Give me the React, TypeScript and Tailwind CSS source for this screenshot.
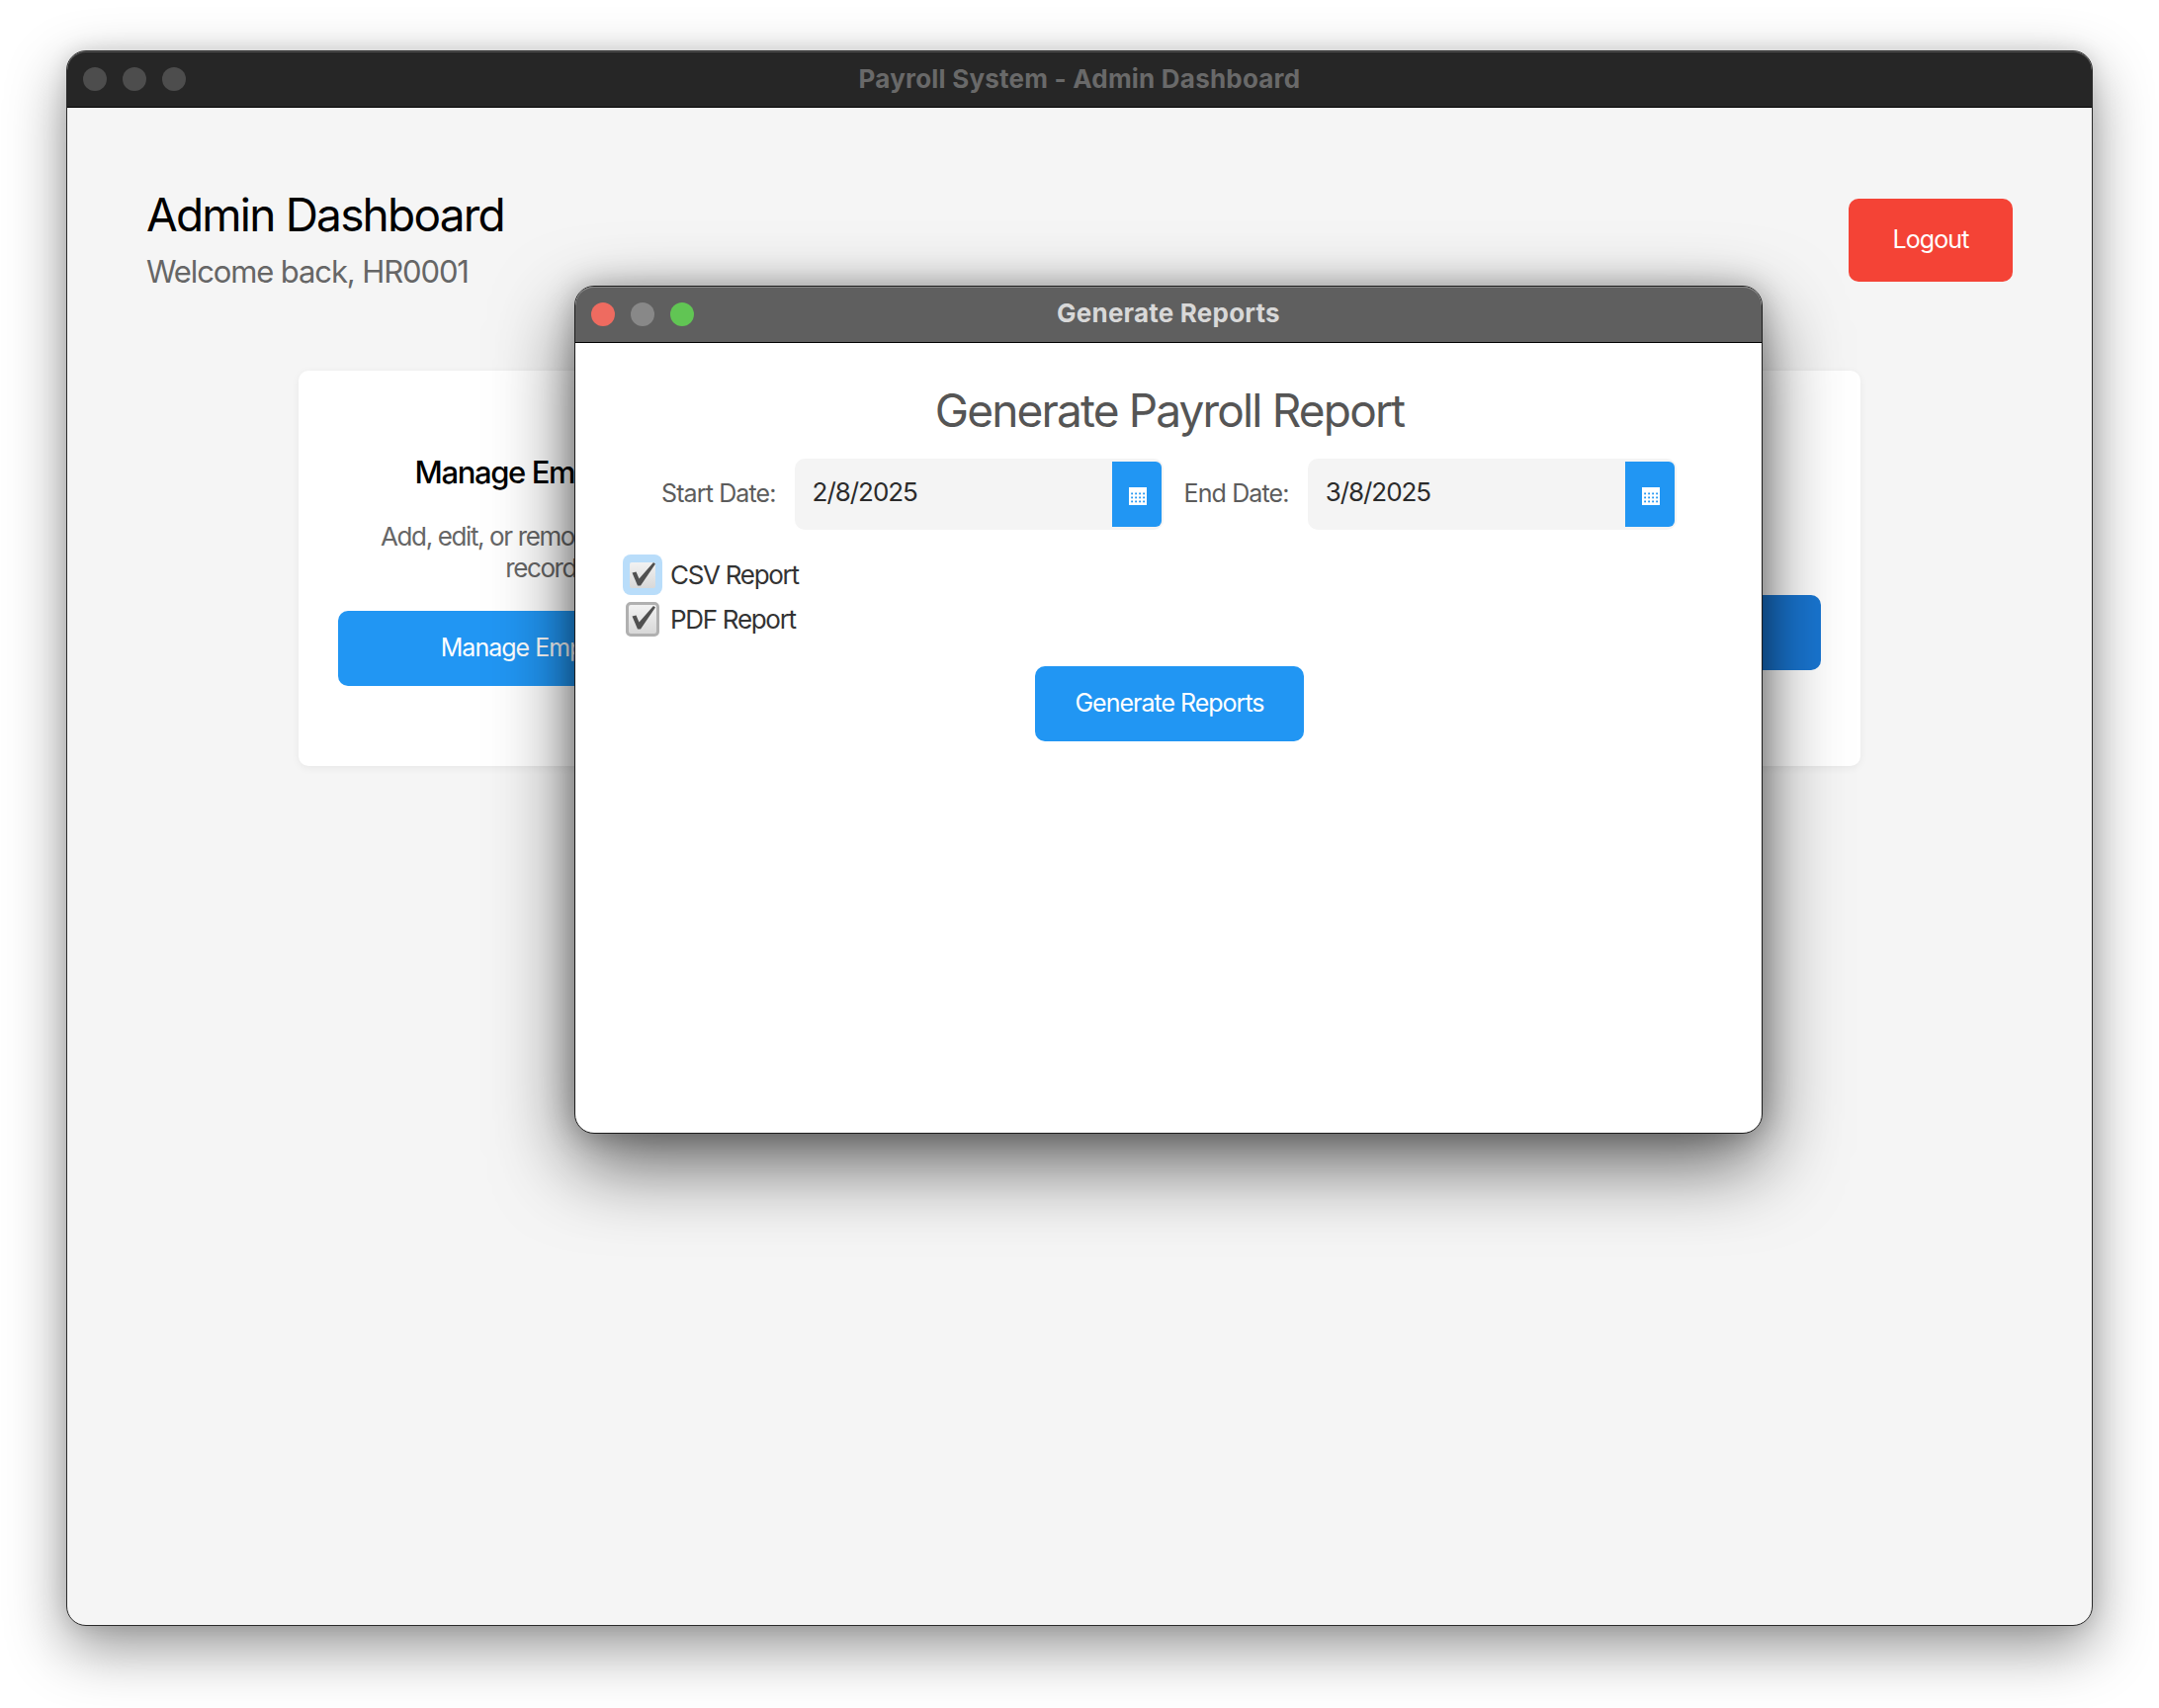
import React from 'react';

function TrafficLights({ colors }: { colors: string[] }) {
  return (
    <div className="absolute left-[16px] top-[16px] flex gap-[16px]">
      <span className={`w-[24px] h-[24px] rounded-full ${colors[0]}`} />
      <span className={`w-[24px] h-[24px] rounded-full ${colors[1]}`} />
      <span className={`w-[24px] h-[24px] rounded-full ${colors[2]}`} />
    </div>
  );
}

function CalendarIcon() {
  return (
    <svg width="18" height="18" viewBox="0 0 18 18" className="ml-[2px] mt-[4px]">
      <rect width="18" height="18" fill="#fff" />
      {[5.5, 9.5, 13.5].map((y) =>
        [2.2, 6.2, 10.2, 14.2].map((x) => (
          <rect key={`${x}-${y}`} x={x} y={y} width="1.8" height="1.8" fill="#2196f3" />
        )),
      )}
    </svg>
  );
}

function DateField({ value, label, width }: { value: string; label: string; width: string }) {
  return (
    <div className="flex items-center gap-[19px]">
      <span className="text-[25px] tracking-[-0.035em] text-[#5c5c5c]">{label}</span>
      <div className={`flex h-[72px] items-center justify-between rounded-[10px] bg-[#f4f4f4] pl-[18px] pr-[2px] ${width}`}>
        <span className="-mt-[6px] text-[26px] tracking-[-0.04em] text-[#2b2b2b]">{value}</span>
        <div className="flex h-[66px] w-[50px] items-center justify-center rounded-r-[6px] bg-[#2196f3]">
          <CalendarIcon />
        </div>
      </div>
    </div>
  );
}

function Check() {
  return (
    <svg width="40" height="41" viewBox="0 0 40 41" className="absolute left-0 top-0">
      <path d="M9.5 18.5 L13.5 17.5 L16.5 24.5 L31 8 L33 9.5 L18 31.5 L15 31.5 Z" fill="#505050" />
    </svg>
  );
}

function CheckRow({ label, focused }: { label: string; focused?: boolean }) {
  return (
    <div className="flex h-[41px] items-center gap-[8px]">
      {focused ? (
        <div className="relative flex h-[41px] w-[40px] items-center justify-center rounded-[8px] bg-[#b9ddfa]">
          <div className="h-[26px] w-[26px] rounded-[2px] bg-gradient-to-b from-[#f2f2f2] to-[#d8d8d8]" />
          <Check />
        </div>
      ) : (
        <div className="relative mx-[3px] h-[35px] w-[34px] rounded-[5px] border-[3px] border-[#b0b0b0] bg-gradient-to-b from-[#f2f2f2] to-[#d8d8d8]">
          <div className="absolute -left-[6px] -top-[7px]">
            <Check />
          </div>
        </div>
      )}
      <span className="text-[26px] tracking-[-0.05em] text-[#333]">{label}</span>
    </div>
  );
}

function Card({ title, desc, action, dark }: { title: string; desc: React.ReactNode; action: string; dark?: boolean }) {
  return (
    <div className="flex h-[400px] flex-col items-center justify-center rounded-[10px] bg-white px-[40px] text-center shadow-[0_2px_8px_rgba(0,0,0,0.06)]">
      <h2 className="-mt-[1px] text-[31px] font-[450] leading-[46px] tracking-[-0.044em] text-black">{title}</h2>
      <p className="mt-[26px] text-[26px] leading-[32px] tracking-[-0.053em] text-[#666]">{desc}</p>
      <button className={`mt-[27px] h-[76px] w-full rounded-[10px] text-[25px] tracking-[-0.04em] text-white ${dark ? 'bg-[#1976d2]' : 'bg-[#2196f3]'}`}>
        {action}
      </button>
    </div>
  );
}

export default function App() {
  return (
    <div className="h-[1728px] w-[2184px] overflow-hidden bg-white pl-[67px] pt-[51px] font-[Inter,sans-serif]">
      {/* Main window */}
      <div className="relative flex h-[1594px] w-[2050px] flex-col rounded-[20px] border border-[#2a2a2a] bg-[#f5f5f5] shadow-[0_22px_60px_rgba(0,0,0,0.42),0_0_20px_rgba(0,0,0,0.12)]">
        <div className="relative flex h-[57px] items-center justify-center rounded-t-[19px] border-b border-black bg-[#262626] shadow-[inset_0_1px_0_#555]">
          <TrafficLights colors={['bg-[#4d4d4d]', 'bg-[#4d4d4d]', 'bg-[#4d4d4d]']} />
          <span className="-mt-[2px] text-[26px] font-bold tracking-[0.008em] text-[#696969]">Payroll System - Admin Dashboard</span>
        </div>

        <div className="flex flex-1 flex-col px-[80px] pt-[80px]">
          <div className="flex items-start justify-between">
            <div>
              <h1 className="text-[46px] leading-[56px] tracking-[-0.039em] text-black">Admin Dashboard</h1>
              <p className="mt-[7px] text-[31px] leading-[46px] tracking-[-0.036em] text-[#666]">Welcome back, HR0001</p>
            </div>
            <button className="mt-[12px] h-[84px] w-[166px] rounded-[10px] bg-[#f44336] text-[25px] tracking-[-0.035em] text-white">
              Logout
            </button>
          </div>

          <div className="mx-auto mt-[77px] grid w-[1580px] grid-cols-3 gap-[36px]">
            <Card title="Manage Employees" desc={<>Add, edit, or remove employee<br />records</>} action="Manage Employees" />
            <Card title="Process Payroll" desc="Run payroll for the current period" action="Process Payroll" />
            <Card title="Generate Reports" desc="Create payroll reports" action="Reports" dark />
          </div>
        </div>

        {/* Generate Reports dialog */}
        <div className="absolute left-[513px] top-[237px] flex h-[858px] w-[1202px] flex-col rounded-[20px] border border-[#1c1c1c] bg-white shadow-[0_30px_80px_rgba(0,0,0,0.62),0_0_30px_rgba(0,0,0,0.25)]">
          <div className="relative flex h-[57px] items-center justify-center rounded-t-[19px] border-b border-black bg-[#5f5f5f] shadow-[inset_0_1px_0_#888]">
            <TrafficLights colors={['bg-[#ee6b60]', 'bg-[#888888]', 'bg-[#61c554]']} />
            <span className="-mt-[3px] text-[26px] font-bold tracking-[0.008em] text-[#d8d8d8]">Generate Reports</span>
          </div>

          <div className="flex flex-col pl-[48px] pr-[46px]">
            <h2 className="mt-[40px] text-center text-[46px] leading-[56px] tracking-[-0.04em] text-[#555]">Generate Payroll Report</h2>
            <div className="mt-[21px] flex gap-[21px] pl-[39px]">
              <DateField label="Start Date:" value="2/8/2025" width="w-[373px]" />
              <DateField label="End Date:" value="3/8/2025" width="w-[373px]" />
            </div>
            <div className="mt-[25px] flex flex-col gap-[4px]">
              <CheckRow label="CSV Report" focused />
              <CheckRow label="PDF Report" />
            </div>
            <button className="mx-auto mt-[27px] h-[76px] w-[272px] rounded-[10px] bg-[#2196f3] text-[25px] tracking-[-0.04em] text-white">
              Generate Reports
            </button>
          </div>
        </div>
      </div>
    </div>
  );
}
